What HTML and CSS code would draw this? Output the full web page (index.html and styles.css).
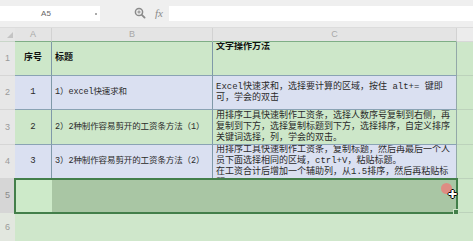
FILE: index.html
```html
<!DOCTYPE html>
<html>
<head>
<meta charset="utf-8">
<link rel="stylesheet" href="styles.css">
</head>
<body>
<div class="app">
  <div class="toolbar">
    <div class="namebox"><span class="ref">A5</span><span class="caret"></span></div>
    <div class="tools">
      <svg class="zoom" width="12" height="12" viewBox="0 0 12 12"><circle cx="5" cy="5" r="3.6" fill="none" stroke="#8a8a8a" stroke-width="1.5"/><path d="M3.4 5h3.2M5 3.4v3.2" stroke="#8a8a8a" stroke-width="1"/><path d="M7.6 7.6l3 3" stroke="#8a8a8a" stroke-width="1.8" stroke-linecap="round"/></svg>
      <span class="fx">fx</span>
    </div>
    <div class="formula"></div>
  </div>
  <div class="sheet">
    <div class="corner"><span class="tri"></span></div>
    <div class="colhead">A</div>
    <div class="colhead">B</div>
    <div class="colhead">C</div>
    <div class="colhead last"></div>

    <div class="rowhead">1</div>
    <div class="cell green center bold">序号</div>
    <div class="cell green bold">标题</div>
    <div class="cell green bold top wrap">文字操作方法</div>
    <div class="cell green edge"></div>

    <div class="rowhead">2</div>
    <div class="cell blue center">1</div>
    <div class="cell blue title">1）excel快速求和</div>
    <div class="cell blue wrap">Excel快速求和，选择要计算的区域，按住 alt+= 键即可，学会的双击</div>
    <div class="cell green edge"></div>

    <div class="rowhead">3</div>
    <div class="cell green center">2</div>
    <div class="cell green title">2）2种制作容易剪开的工资条方法（1）</div>
    <div class="cell green wrap">用排序工具快速制作工资条，选择人数序号复制到右侧，再复制到下方，选择复制标题到下方，选择排序，自定义排序关键词选择，列，学会的双击。</div>
    <div class="cell green edge"></div>

    <div class="rowhead">4</div>
    <div class="cell blue center">3</div>
    <div class="cell blue title">3）2种制作容易剪开的工资条方法（2）</div>
    <div class="cell blue wrap top">用排序工具快速制作工资条，复制标题，然后再最后一个人员下面选择相同的区域，ctrl+V，粘贴标题。<br>在工资合计后增加一个辅助列，从1.5排序，然后再粘贴标题</div>
    <div class="cell green edge"></div>

    <div class="rowhead sel">5</div>
    <div class="cell active"></div>
    <div class="cell picked"></div>
    <div class="cell picked"></div>
    <div class="cell green edge"></div>

    <div class="rowhead faint">6</div>
    <div class="cell empty"></div>
    <div class="cell empty"></div>
    <div class="cell empty"></div>
    <div class="cell empty edge"></div>

    <div class="selection"><span class="handle"></span><span class="dot"></span><span class="cursor">✚</span></div>
  </div>
</div>
</body>
</html>
```

FILE: styles.css
```css
html, body {
  margin: 0;
  padding: 0;
  background: #cfe7cb;
  overflow: hidden;
}
.app {
  width: 473px;
  height: 241px;
  display: flex;
  flex-direction: column;
  font-family: "Liberation Mono", "Noto Sans CJK SC", monospace;
  overflow: hidden;
}
.toolbar {
  height: 28px;
  box-sizing: border-box;
  background: #efefef;
  border-bottom: 1px solid #dcdcdc;
  display: flex;
  align-items: center;
  padding-bottom: 1px;
}
.namebox {
  width: 100px;
  height: 15px;
  background: #fff;
  display: flex;
  align-items: center;
  justify-content: center;
  position: relative;
  font-family: "Liberation Sans", sans-serif;
  font-size: 8px;
  color: #666;
}
.namebox .ref { margin-left: -8px; }
.caret {
  position: absolute;
  right: 3px;
  top: 7px;
  width: 2px;
  height: 2px;
  background: #aaa;
}
.tools {
  width: 69px;
  display: flex;
  align-items: center;
  gap: 9px;
  padding-left: 34px;
  box-sizing: border-box;
}
.fx {
  font-family: "Liberation Serif", serif;
  font-style: italic;
  font-size: 11px;
  color: #8a8a8a;
}
.formula {
  flex: 1;
  height: 15px;
  background: #fff;
}
.sheet {
  flex: 1;
  position: relative;
  display: grid;
  grid-template-columns: 15px 37px 161px 244px 1fr;
  grid-template-rows: 14px 34px 34px 35px 34px 34px 1fr;
  font-size: 9px;
  line-height: 11px;
  color: #2a2a2a;
}
.corner {
  background: #e6e6e6;
  border-bottom: 1px solid #c9d6c9;
  position: relative;
}
.tri {
  position: absolute;
  right: 2px;
  bottom: 3px;
  width: 0;
  height: 0;
  border-left: 6px solid transparent;
  border-bottom: 6px solid #c4c4c4;
}
.colhead {
  background: #e4e4e4;
  border-right: 1px solid #d2d2d2;
  border-bottom: 1px solid #7fae86;
  display: flex;
  align-items: center;
  justify-content: center;
  font-family: "Liberation Sans", sans-serif;
  font-size: 9px;
  color: #a8a8a8;
}
.colhead.last {
  background: #ececec;
  border-right: none;
  border-bottom-color: #d8d8d8;
}
.rowhead {
  background: #e7e7e7;
  border-bottom: 1px solid #d6d6d6;
  display: flex;
  align-items: center;
  justify-content: center;
  font-family: "Liberation Sans", sans-serif;
  font-size: 9px;
  color: #9a9a9a;
}
.rowhead.sel { background: #d6d6d6; color: #8a8a8a; }
.rowhead.faint { background: #e2e7df; border-bottom: none; }
.cell {
  box-sizing: border-box;
  border-right: 1px solid #7f99a8;
  border-bottom: 1px solid #8aa3b4;
  display: flex;
  align-items: center;
  padding: 0 3px;
  overflow: hidden;
  white-space: nowrap;
}
.cell.title { font-size: 8.5px; letter-spacing: -0.1px; padding-left: 3px; }
.cell.wrap { white-space: normal; display: block; }
.cell.wrap:not(.top) { display: flex; }
.cell.top { align-items: flex-start; }
.cell.center { justify-content: center; }
.cell.bold { font-weight: bold; color: #111; }
.green { background: #cde7c9; }
.blue { background: #dae0f1; }
.cell.edge { border-right: none; border-bottom-color: #bcd2bb; }
.sheet > .cell:nth-child(5n+4) { border-right-color: #93a8a8; }
.sheet > .cell.active { background: #cdeac9; border: none; }
.sheet > .cell.picked { background: #a9c6a4; border: none; }
.sheet > .cell.empty { background: #cfe7cb; border: none; }
.selection {
  grid-column: 2 / 5;
  grid-row: 6 / 7;
  position: absolute;
  top: -1px;
  left: -1px;
  right: -1px;
  bottom: -1px;
  border: 2px solid #437f4a;
  pointer-events: none;
}
.handle {
  position: absolute;
  right: -3px;
  bottom: -3px;
  width: 4px;
  height: 4px;
  background: #437f4a;
  border: 1px solid #cfe7cb;
}
.dot {
  position: absolute;
  right: 4px;
  top: 3px;
  width: 11px;
  height: 11px;
  border-radius: 50%;
  background: rgba(240, 120, 120, 0.75);
}
.cursor {
  position: absolute;
  right: -1px;
  top: 9px;
  font-family: "DejaVu Sans", sans-serif;
  font-size: 11px;
  line-height: 11px;
  color: #fff;
  text-shadow: 1px 0 0 #000, -1px 0 0 #000, 0 1px 0 #000, 0 -1px 0 #000;
}
```
